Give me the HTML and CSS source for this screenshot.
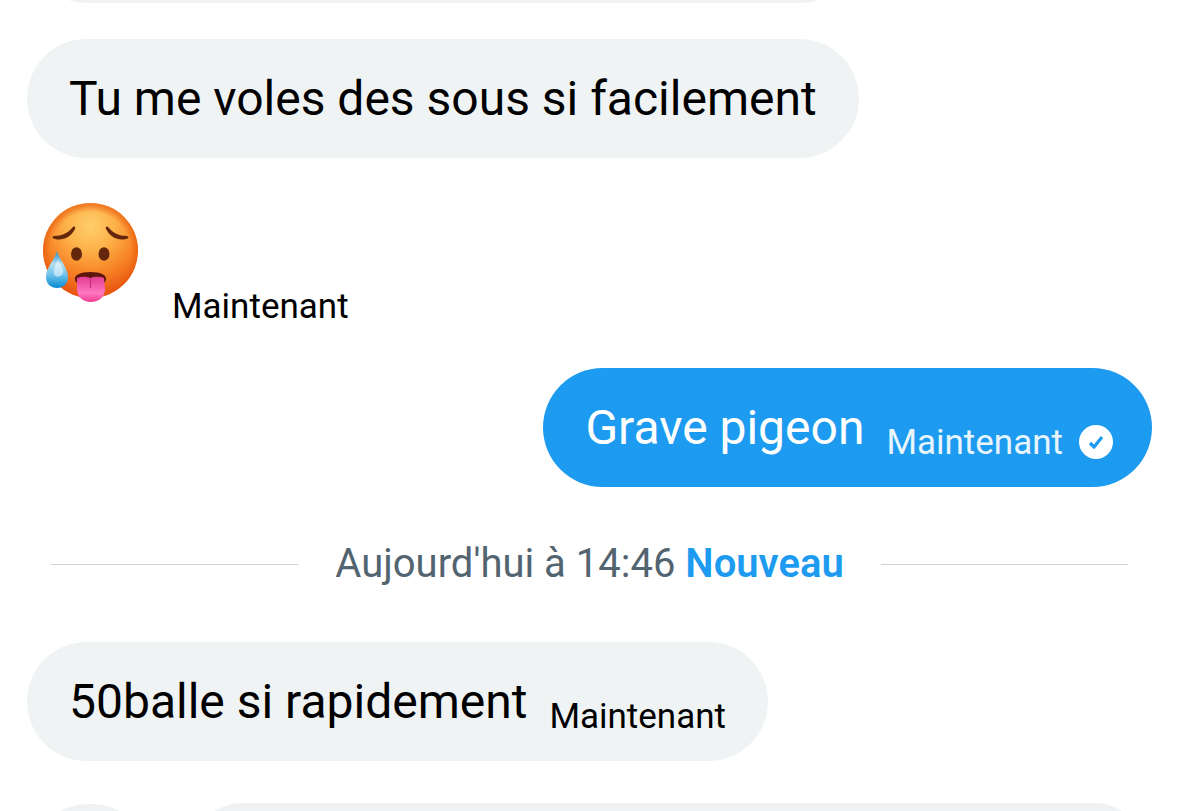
FILE: index.html
```html
<!DOCTYPE html>
<html lang="fr">
<head>
<meta charset="utf-8">
<meta name="viewport" content="width=device-width, initial-scale=1">
<title>Messages</title>
<link rel="stylesheet" href="styles.css">
</head>
<body>
<main class="chat">
  <div class="bubble bubble-previous"></div>
  <div class="bubble"><p class="text">Tu me voles des sous si facilement</p></div>
  <div class="reaction">
    <svg class="emoji" viewBox="0 0 100 102" role="img">
      <defs>
        <radialGradient id="face" cx="50%" cy="24%" r="76%">
          <stop offset="0" stop-color="#ffcf6c"/>
          <stop offset=".35" stop-color="#fdb048"/>
          <stop offset=".7" stop-color="#f67e22"/>
          <stop offset="1" stop-color="#e64f10"/>
        </radialGradient>
        <radialGradient id="rim" cx="50%" cy="52%" r="50%">
          <stop offset=".85" stop-color="#e8590c" stop-opacity="0"/>
          <stop offset="1" stop-color="#e8590c" stop-opacity=".6"/>
        </radialGradient>
        <linearGradient id="drop" x1="0" y1="0" x2="0" y2="1">
          <stop offset="0" stop-color="#218bc4"/>
          <stop offset=".35" stop-color="#b5dff1"/>
          <stop offset=".65" stop-color="#6cc1ea"/>
          <stop offset="1" stop-color="#078bd2"/>
        </linearGradient>
        <linearGradient id="tongue" x1="0" y1="0" x2="0" y2="1">
          <stop offset="0" stop-color="#e33d91"/>
          <stop offset=".65" stop-color="#ff77c0"/>
          <stop offset="1" stop-color="#f13b92"/>
        </linearGradient>
      </defs>
      <circle cx="50.500" cy="49.500" r="47.500" fill="url(#face)"/>
      <circle cx="50.500" cy="49.500" r="47.500" fill="url(#rim)"/>
      <g fill="#65270b">
        <path d="M14 35c8 0 14-3 19-9 1-1 3 0 2 2-4 8-12 12-20 10-3 0-3-3-1-3z"/>
        <path d="M87 35c-8 0-14-3-19-9-1-1-3 0-2 2 4 8 12 12 20 10 3 0 3-3 1-3z"/>
        <ellipse cx="36.500" cy="53" rx="5.500" ry="6.800"/>
        <ellipse cx="64" cy="53" rx="5.500" ry="6.800"/>
      </g>
      <path d="M35 79c-1-5 5-8 15.500-8S67 74 66 79c-1 3-3 4-5 2-4-2-17-2-21 0-2 2-4 1-5-2z" fill="#5d160d"/>
      <path d="M37 77c5-2 10-1 13.500 0 3-1 8-2 13.500 0l1 11c0 8-6 13-14 13s-14-5-14-13z" fill="url(#tongue)"/>
      <path d="M50.500 77v10" stroke="#ce2c7e" stroke-width="1.200"/>
      <path d="M17 50c-2 8-11 17-11 26 0 7 5 11 11 11s11-4 11-11c0-9-9-18-11-26z" fill="url(#drop)"/>
      <path d="M18 59c-3 5-5 10-4 14 2 4 8 3 9-1 1-3-2-8-5-13z" fill="#fff" opacity=".5"/>
    </svg>
    <time class="time">Maintenant</time>
  </div>
  <div class="bubble bubble-sent">
    <p class="text">Grave pigeon</p>
    <time class="time">Maintenant</time>
    <svg class="check" viewBox="0 0 34 34"><circle cx="17" cy="17" r="17" fill="#fff"/><path d="M11 18l4 4 8-10" fill="none" stroke="#1d9bf0" stroke-width="3.200" stroke-linejoin="round"/></svg>
  </div>
  <div class="divider"><p class="date">Aujourd'hui à 14:46 <strong class="new">Nouveau</strong></p></div>
  <div class="bubble"><p class="text">50balle si rapidement</p><time class="time">Maintenant</time></div>
  <form class="composer">
    <button class="add" type="button"></button>
    <input class="field" type="text">
  </form>
</main>
</body>
</html>
```
FILE: styles.css
```css
* { box-sizing: border-box; }
body {
  margin: 0;
  height: 100vh;
  overflow: hidden;
  background: #fff;
  color: #000;
  font-family: Roboto, "Noto Sans", sans-serif;
}
p { margin: 0; }
.chat {
  display: flex;
  flex-direction: column;
  align-items: flex-start;
  margin-top: -116px;
  padding: 0 27px;
}
.bubble {
  display: flex;
  align-items: center;
  flex-shrink: 0;
  gap: 22px;
  height: 119px;
  padding: 0 42px;
  border-radius: 60px;
  background: #eff3f4;
}
.bubble-previous { width: 74%; margin-bottom: 36px; }
.text { font-size: 48px; line-height: 60px; white-space: nowrap; }
.time { font-size: 35px; line-height: 40px; }
.bubble .time { margin-top: 31px; }
.reaction {
  display: flex;
  align-items: flex-end;
  gap: 32px;
  height: 126px;
  margin: 43px 0 41px 13px;
}
.emoji { width: 100px; height: 102px; align-self: flex-start; }
.bubble-sent {
  align-self: flex-end;
  background: #1d9bf0;
  color: #fff;
}
.bubble-sent .time { color: #e8f5fd; }
.check { width: 34px; height: 34px; margin: 29px -3px 0 -6px; }
.divider {
  display: flex;
  align-items: center;
  align-self: stretch;
  gap: 37px;
  height: 50px;
  margin: 52px 24px 53px;
}
.divider::before, .divider::after {
  content: "";
  flex: 1;
  height: 1px;
  background: #cfd3d6;
}
.date { color: #536471; font-size: 40px; line-height: 50px; white-space: nowrap; }
.new { color: #1d9bf0; font-weight: 600; }
.composer {
  display: flex;
  align-self: stretch;
  gap: 32px;
  margin-top: 42px;
}
.add, .field { height: 118px; padding: 0; border: 0; background: #eff1f3; }
.add { width: 126px; margin-top: 1px; border-radius: 50%; }
.field { flex: 1; border-radius: 59px; padding: 0 42px; font: inherit; font-size: 48px; }
```
